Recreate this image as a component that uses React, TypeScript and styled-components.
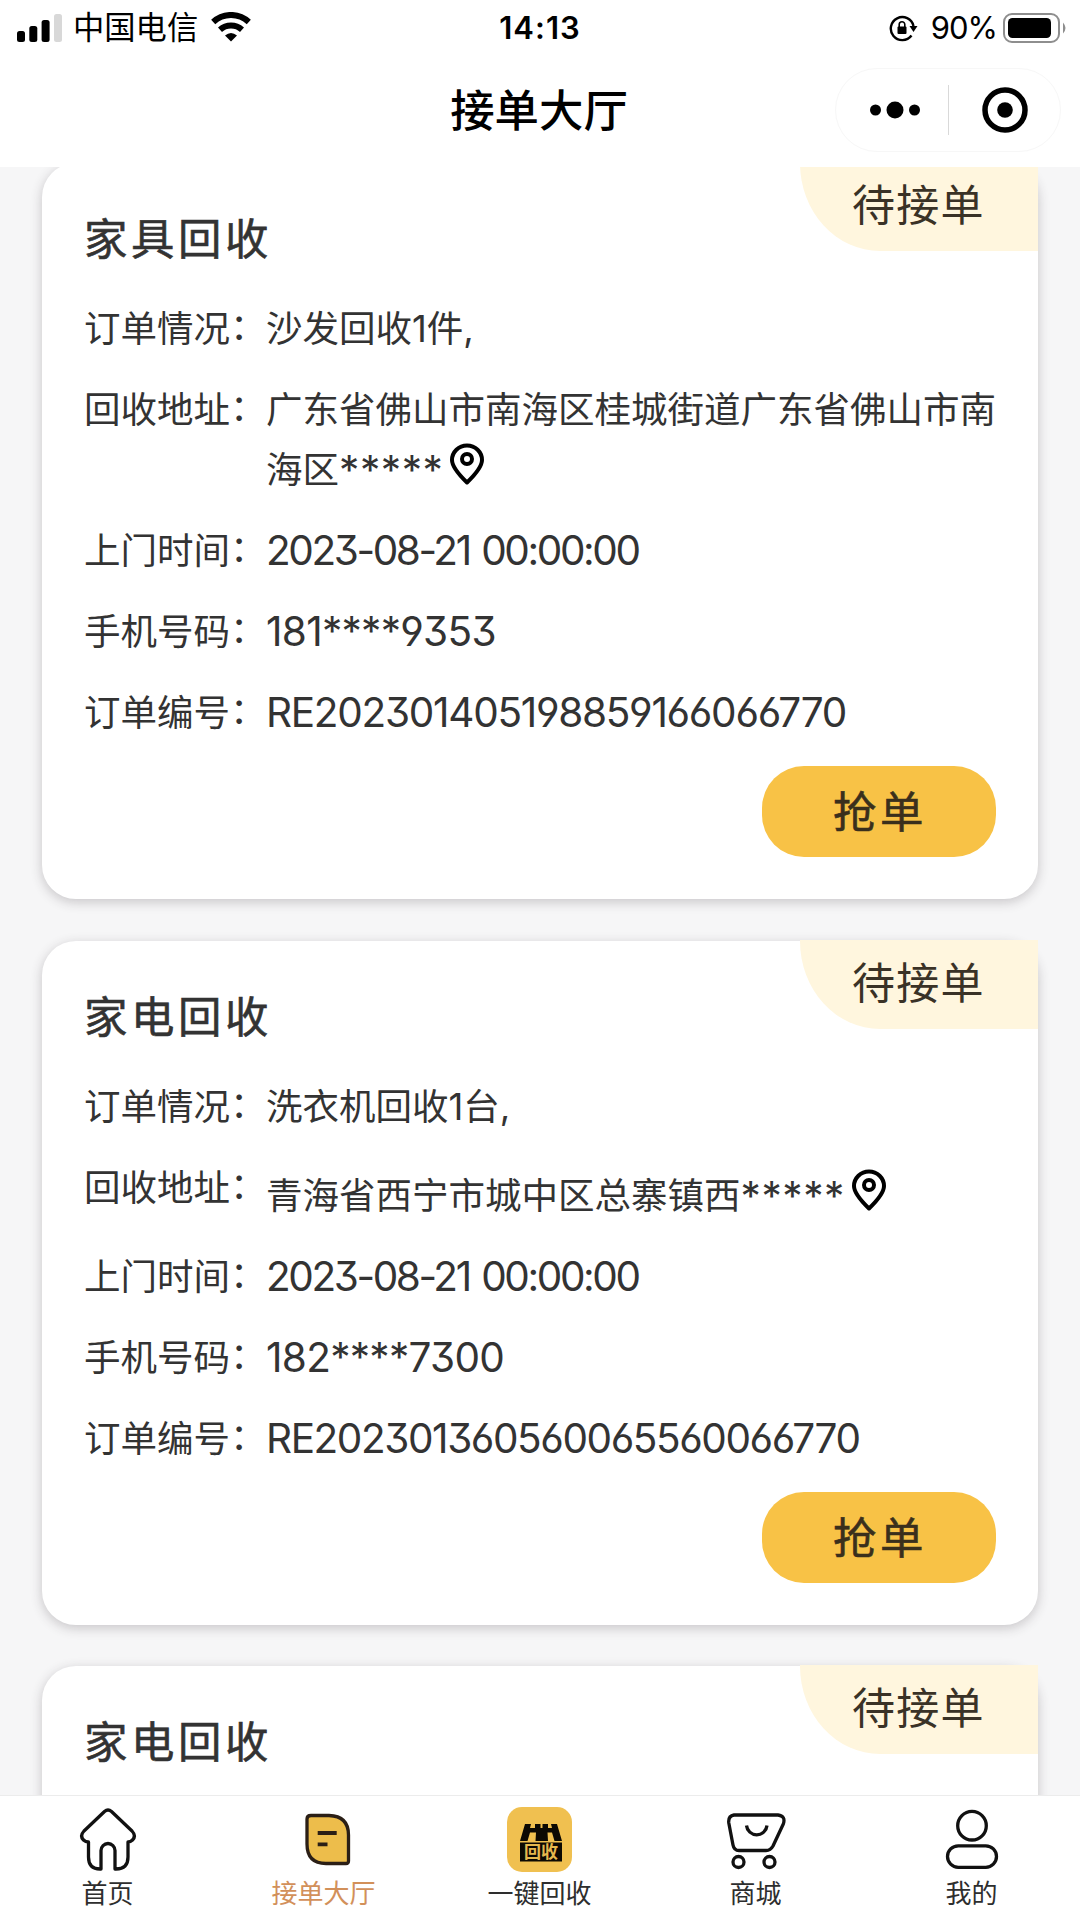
import React from 'react';
import styled, { createGlobalStyle } from 'styled-components';

const SANS = `Inter, "Noto Sans CJK SC", sans-serif`;

const GlobalStyle = createGlobalStyle`
  * { box-sizing: border-box; }
  body { margin: 0; background: #fff; font-family: ${SANS}; color: #333; }
`;

const Screen = styled.div`
  width: 1080px;
  height: 1920px;
  display: flex;
  flex-direction: column;
  overflow: hidden;
  background: #fff;
`;

const Header = styled.header`
  flex: none;
  height: 167px;
  background: #fff;
  color: #000;
`;

const StatusBar = styled.div`
  height: 54px;
  display: grid;
  grid-template-columns: 1fr auto 1fr;
  align-items: center;
  padding: 0 13px 0 17px;
`;

const StatusGroup = styled.div<{ $end?: boolean }>`
  display: flex;
  align-items: center;
  justify-content: ${(p) => (p.$end ? 'flex-end' : 'flex-start')};
`;

const Carrier = styled.span`
  margin: 0 13px 0 11px;
  padding-top: 1px;
  font-size: 31.3px;
  line-height: 54px;
  white-space: nowrap;
`;

const Clock = styled.span`
  margin-right: 4px;
  font-size: 31px;
  font-weight: 600;
  letter-spacing: 1px;
`;

const Percent = styled.span`
  margin: 0 6px 0 13px;
  font-size: 31px;
  letter-spacing: -1px;
`;

const NavBar = styled.div`
  height: 113px;
  display: grid;
  grid-template-columns: 1fr auto 1fr;
  align-items: center;
  padding: 0 19px 1px 17px;
`;

const NavTitle = styled.h1`
  grid-column: 2;
  margin: 2px 0 0;
  font-size: 44.4px;
  line-height: 60px;
  font-weight: 500;
`;

const Capsule = styled.div`
  justify-self: end;
  width: 226px;
  height: 84px;
  display: grid;
  grid-template-columns: 112px 1px 111px;
  align-items: center;
  justify-items: center;
  padding-bottom: 1px;
  border: 1px solid #f7f7f7;
  border-radius: 42px;
`;

const MenuDots = styled.svg`
  width: 50px;
  height: 20px;
  margin-left: 5px;
`;

const CapsuleDivider = styled.span`
  width: 1px;
  height: 50px;
  background: #d9d9d9;
`;

const List = styled.main`
  flex: 1;
  min-height: 0;
  overflow: hidden;
  background: #f6f6f7;
  padding: 0 42px;
`;

const Cards = styled.div`
  display: flex;
  flex-direction: column;
  gap: 41.5px;
  margin-top: -4px;
`;

const Card = styled.article`
  position: relative;
  min-height: 180px;
  padding: 46px 42px 42px;
  background: #fff;
  border-radius: 34px;
  box-shadow: 0 3px 12px rgba(50, 40, 50, 0.24);
`;

const Badge = styled.span`
  position: absolute;
  top: -1px;
  right: 0;
  width: 238px;
  height: 89px;
  padding-left: 52px;
  background: #fff6de;
  border-bottom-left-radius: 80px 88px;
  font-size: 43px;
  line-height: 87px;
  letter-spacing: 1.2px;
  color: #3a3226;
`;

const CardTitle = styled.h2`
  margin: 0;
  font-size: 43.4px;
  line-height: 60px;
  font-weight: 400;
  letter-spacing: 3.6px;
  -webkit-text-stroke: 0.6px currentColor;
`;

const Fields = styled.dl`
  margin: 34px 0 27px;
  display: grid;
  gap: 29px;
`;

const Field = styled.div`
  display: flex;
  font-size: 36.5px;
  line-height: 52px;
`;

const Label = styled.dt`
  flex: none;
  width: 182px;
  white-space: nowrap;
`;

const Colon = styled.span`
  line-height: 0;
  vertical-align: 2px;
`;

const Value = styled.dd<{ $numeric?: boolean; $tracking?: number; $wordGap?: number }>`
  margin: 0;
  width: 732px;
  font-size: ${(p) => (p.$numeric ? '40.5px' : 'inherit')};
  letter-spacing: ${(p) => p.$tracking ?? 0}px;
  word-spacing: ${(p) => p.$wordGap ?? 0}px;
  font-feature-settings: 'cv03', 'cv04', 'cv09';
`;

const Mask = styled.span`
  font-size: 40.5px;
  line-height: 0;
  letter-spacing: 0.6px;
  vertical-align: -2px;
`;

const PinSvg = styled.svg`
  width: 40px;
  height: 50px;
  margin-left: 4px;
  vertical-align: -3px;
`;

const Actions = styled.div`
  display: flex;
  justify-content: flex-end;
`;

const GrabButton = styled.button`
  width: 234px;
  height: 91px;
  padding: 0 0 5px 2px;
  border: 0;
  border-radius: 42px;
  background: #f8c246;
  color: #3a2f1c;
  font-family: inherit;
  font-size: 43.4px;
  letter-spacing: 3.6px;
  -webkit-text-stroke: 0.6px currentColor;
`;

const TabBar = styled.nav`
  flex: none;
  height: 125px;
  display: grid;
  grid-template-columns: repeat(5, 1fr);
  border-top: 1px solid #ececec;
  background: #fff;
`;

const Tab = styled.a<{ $active?: boolean }>`
  display: flex;
  flex-direction: column;
  align-items: center;
  padding-top: 8px;
  color: ${(p) => (p.$active ? '#d2905a' : '#2e2e2e')};
`;

const TabLabel = styled.span`
  padding-right: 1px;
  font-size: 26px;
  line-height: 36px;
`;

const TabIcon = styled.svg`
  width: 80px;
  height: 70px;
  margin-bottom: 2px;
  fill: none;
  stroke: #111;
  stroke-width: 3.3;
  stroke-linejoin: round;
`;

const HomeIcon = () => (
  <TabIcon viewBox="0 0 80 70">
    <path d="M36.5 7.5Q40 4.500 43.5 7.5L64 27Q68.500 32 64.500 36Q62.500 38 60 38V53Q60 65 48 65H47V46.500A7 7 0 0 0 33 46.500V65H32Q20.500 65 20.500 53V38Q17.500 38 15.500 36Q11.500 32 16 27Z" />
  </TabIcon>
);

const OrdersIcon = () => (
  <TabIcon viewBox="0 0 80 70">
    <path d="M27 11.500H45Q64.500 12 64.500 31V57Q64.500 59.500 62 59.500H42Q23 59.500 23 40V15Q23 11.500 27 11.500Z" fill="#edbd4b" stroke="#2b1f16" />
    <path d="M33.700 29H52.700M33.700 40.300H43.500" stroke="#2b1f16" strokeWidth="3.800" />
  </TabIcon>
);

const RecycleIcon = () => (
  <TabIcon viewBox="0 0 80 70">
    <rect x="7" y="3" width="65" height="65" rx="15" fill="#f0c050" stroke="none" />
    <path d="M25 20H31L30 24H35V20H40.500V24H42.500V20H48V24H52L51 20H57L62 37H54.500L52 28.500H47.500L48 37H35.500L36 28.500H30L27.500 37H20Z" fill="#0c0903" stroke="none" />
    <rect x="20" y="38.500" width="42" height="19" fill="#0c0903" stroke="none" />
    <text x="41" y="54" textAnchor="middle" fontSize="17" fontWeight="700" fill="#e5b84e" stroke="none">回收</text>
  </TabIcon>
);

const ShopIcon = () => (
  <TabIcon viewBox="0 0 80 70">
    <path d="M18 11H62Q70 12 67.300 20L57 42Q54.500 46.500 50 46.500H23Q18 46.500 17 41L12.800 19Q12 12 18 11Z" />
    <path d="M30.500 21.500A10.300 10.300 0 0 0 51 21.500" />
    <circle cx="22.500" cy="58" r="5.500" />
    <circle cx="53.500" cy="58" r="5.500" />
  </TabIcon>
);

const UserIcon = () => (
  <TabIcon viewBox="0 0 80 70">
    <circle cx="40" cy="21.700" r="14.300" />
    <rect x="15.500" y="41.800" width="49" height="21.500" rx="10.750" />
  </TabIcon>
);

const SignalIcon = () => (
  <svg width="45" height="28" viewBox="0 0 45 28">
    <rect x="0" y="17" width="8" height="11" rx="2.500" />
    <rect x="12.300" y="12" width="8" height="16" rx="2.500" />
    <rect x="24.600" y="6" width="8" height="22" rx="2.500" />
    <rect x="37" y="0" width="8" height="28" rx="2.500" fill="#d8d8d8" />
  </svg>
);

const WifiIcon = () => (
  <svg width="40" height="31" viewBox="0 0 40 31">
    <g fill="none" stroke="#000" strokeWidth="6">
      <path d="M2.200 10A26 26 0 0 1 37.800 10" />
      <path d="M9 17.800A16.500 16.500 0 0 1 31 17.800" />
    </g>
    <path d="M14 23.500Q20 18.500 26 23.500L20 29.500Z" />
  </svg>
);

const LockIcon = () => (
  <svg width="29" height="28" viewBox="0 0 29 28">
    <path d="M22.500 21.500A11.500 11.500 0 1 1 24.500 12" fill="none" stroke="#000" strokeWidth="2.400" />
    <path d="M20.500 12H28.500L24.500 18Z" />
    <rect x="8.500" y="12.500" width="9" height="7.500" rx="1" />
    <path d="M10.200 13V10.500A2.800 2.800 0 0 1 15.800 10.500V13" fill="none" stroke="#000" strokeWidth="1.600" />
  </svg>
);

const BatteryIcon = () => (
  <svg width="64" height="30" viewBox="0 0 64 30">
    <rect x="1" y="1" width="55" height="28" rx="8" fill="none" stroke="#8e8e8e" strokeWidth="2" />
    <rect x="5" y="5" width="43" height="20" rx="4.500" />
    <path d="M60 9.500Q65 15 60 20.500Z" fill="#8e8e8e" />
  </svg>
);

const PinIcon = () => (
  <PinSvg viewBox="0 0 40 50" fill="none" stroke="#000" strokeWidth="4">
    <path d="M20 46.500Q5 32 5 24A15 14.500 0 0 1 35 24Q35 32 20 46.500Z" strokeLinejoin="round" />
    <circle cx="20" cy="23" r="5" />
  </PinSvg>
);

interface OrderDetails {
  summary: string;
  address: string;
  time: string;
  phone: string;
  code: string;
  codeTracking: number;
}

interface Order {
  title: string;
  details?: OrderDetails;
}

const orders: Order[] = [
  {
    title: '家具回收',
    details: {
      summary: '沙发回收1件,',
      address: '广东省佛山市南海区桂城街道广东省佛山市南海区',
      time: '2023-08-21 00:00:00',
      phone: '181****9353',
      code: 'RE202301405198859166066770',
      codeTracking: -1.28,
    },
  },
  {
    title: '家电回收',
    details: {
      summary: '洗衣机回收1台,',
      address: '青海省西宁市城中区总寨镇西',
      time: '2023-08-21 00:00:00',
      phone: '182****7300',
      code: 'RE202301360560065560066770',
      codeTracking: -1.42,
    },
  },
  { title: '家电回收' },
];

const FieldLabel = ({ text }: { text: string }) => (
  <Label>{text}<Colon>：</Colon></Label>
);

const OrderFields = ({ details }: { details: OrderDetails }) => (
  <>
    <Fields>
      <Field><FieldLabel text="订单情况" /><Value>{details.summary}</Value></Field>
      <Field><FieldLabel text="回收地址" /><Value>{details.address}<Mask>*****</Mask><PinIcon /></Value></Field>
      <Field><FieldLabel text="上门时间" /><Value $numeric $tracking={-2.4} $wordGap={2.5}>{details.time}</Value></Field>
      <Field><FieldLabel text="手机号码" /><Value $numeric $tracking={-0.7}>{details.phone}</Value></Field>
      <Field><FieldLabel text="订单编号" /><Value $numeric $tracking={details.codeTracking}>{details.code}</Value></Field>
    </Fields>
    <Actions><GrabButton>抢单</GrabButton></Actions>
  </>
);

const OrderCard = ({ order }: { order: Order }) => (
  <Card>
    <Badge>待接单</Badge>
    <CardTitle>{order.title}</CardTitle>
    {order.details && <OrderFields details={order.details} />}
  </Card>
);

const tabs = [
  { label: '首页', Icon: HomeIcon },
  { label: '接单大厅', Icon: OrdersIcon, active: true },
  { label: '一键回收', Icon: RecycleIcon },
  { label: '商城', Icon: ShopIcon },
  { label: '我的', Icon: UserIcon },
];

export default function App() {
  return (
    <Screen>
      <GlobalStyle />
      <Header>
        <StatusBar>
          <StatusGroup><SignalIcon /><Carrier>中国电信</Carrier><WifiIcon /></StatusGroup>
          <Clock>14:13</Clock>
          <StatusGroup $end><LockIcon /><Percent>90%</Percent><BatteryIcon /></StatusGroup>
        </StatusBar>
        <NavBar>
          <NavTitle>接单大厅</NavTitle>
          <Capsule>
            <MenuDots viewBox="0 0 50 20">
              <circle cx="5.500" cy="10" r="5.500" />
              <circle cx="25" cy="10" r="8.500" />
              <circle cx="44.500" cy="10" r="5.500" />
            </MenuDots>
            <CapsuleDivider />
            <svg width="46" height="46" viewBox="0 0 46 46">
              <circle cx="23" cy="23" r="20" fill="none" stroke="#000" strokeWidth="5.500" />
              <circle cx="23" cy="23" r="7.800" />
            </svg>
          </Capsule>
        </NavBar>
      </Header>
      <List>
        <Cards>
          {orders.map((order, i) => <OrderCard key={i} order={order} />)}
        </Cards>
      </List>
      <TabBar>
        {tabs.map(({ label, Icon, active }) => (
          <Tab key={label} $active={active}><Icon /><TabLabel>{label}</TabLabel></Tab>
        ))}
      </TabBar>
    </Screen>
  );
}
